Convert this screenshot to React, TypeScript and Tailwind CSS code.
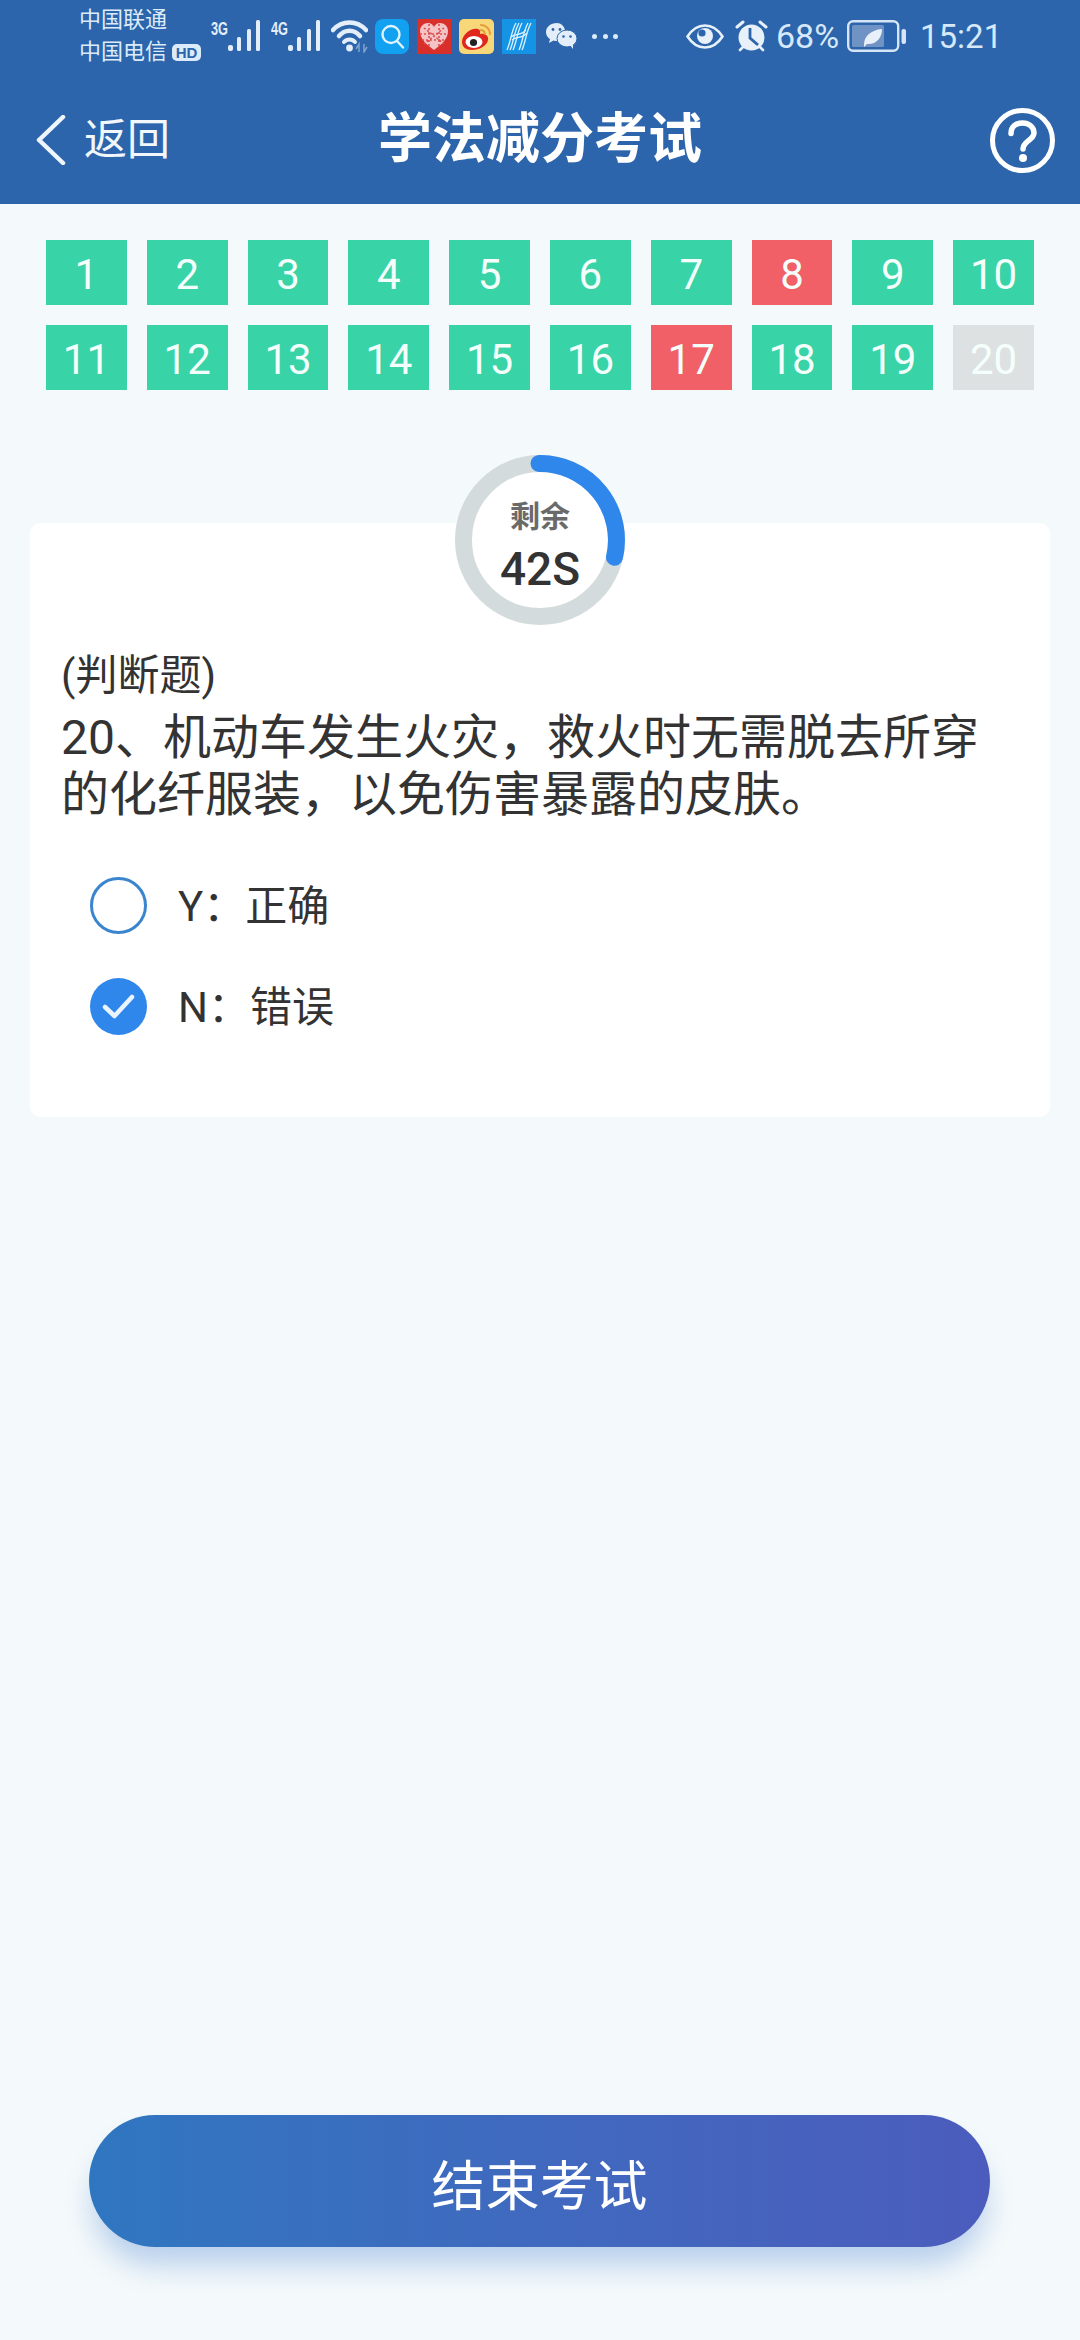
import React from "react";

const green = "bg-[#38d3a7]";
const cells: { n: number; bg: string }[] = Array.from({ length: 20 }, (_, i) => {
  const n = i + 1;
  if (n === 8 || n === 17) return { n, bg: "bg-[#f06066]" };
  if (n === 20) return { n, bg: "bg-[#dde1e2]" };
  return { n, bg: green };
});

function Signal({ label, w }: { label: string; w: number }) {
  return (
    <svg width={w} height="36" viewBox="0 0 51 36" className="shrink-0">
      <text x="0" y="17" fill="#e3eefa" fontSize="18" fontWeight="700" fontFamily="'Liberation Sans', sans-serif" textLength="17" lengthAdjust="spacingAndGlyphs">
        {label}
      </text>
      <rect x="17" y="27" width="5" height="6" rx="2" fill="#e3eefa" />
      <rect x="26" y="19" width="4" height="14" rx="1.5" fill="#e3eefa" />
      <rect x="36" y="11" width="4" height="22" rx="1.5" fill="#e3eefa" />
      <rect x="45" y="2" width="4" height="31" rx="1.5" fill="#e3eefa" />
    </svg>
  );
}

function Wifi() {
  return (
    <svg width="37" height="34" viewBox="0 0 37 34" className="shrink-0" fill="none">
      <path d="M2 11 C 11 1, 26 1, 35 11" stroke="#e3eefa" strokeWidth="4.500" strokeLinecap="round" />
      <path d="M8 17 C 14 10, 23 10, 29 17" stroke="#e3eefa" strokeWidth="4.500" strokeLinecap="round" />
      <path d="M13 23 C 16 19.5, 21 19.5, 24 23" stroke="#e3eefa" strokeWidth="4" strokeLinecap="round" />
      <circle cx="18.5" cy="29" r="3.400" fill="#e3eefa" />
      <path d="M28 33 V25 L25 30 M33 25 V33 L36 28" stroke="#7fa3cf" strokeWidth="1.5" />
    </svg>
  );
}

function SearchApp() {
  return (
    <svg width="34" height="35" viewBox="0 0 34 35" className="shrink-0" fill="none">
      <rect width="34" height="35" rx="8" fill="#12a0f0" />
      <circle cx="16" cy="15.5" r="8.5" stroke="#dff4ff" strokeWidth="2.4" />
      <path d="M22 22 L28 28.5" stroke="#dff4ff" strokeWidth="2.4" strokeLinecap="round" />
    </svg>
  );
}

function HeartApp() {
  return (
    <svg width="34" height="35" viewBox="0 0 34 35" className="shrink-0">
      <rect width="34" height="35" fill="#d92f2a" />
      <path d="M17 31 C 10 26, 3 20, 3 12 C 3 7, 7 4, 11 4 C 14 4, 16 6, 17 8 C 18 6, 20 4, 23 4 C 27 4, 31 7, 31 12 C 31 20, 24 26, 17 31 Z" fill="#f4c3c6" />
      <path d="M7 9 L27 25 M27 9 L7 25 M12 5 L12 27 M22 5 L22 27 M3 15 L31 15 M5 21 L29 21" stroke="#d9504f" strokeWidth="1.6" strokeDasharray="2 2" />
    </svg>
  );
}

function WeiboApp() {
  return (
    <svg width="35" height="35" viewBox="0 0 35 35" className="shrink-0" fill="none">
      <rect width="35" height="35" rx="5" fill="#f8d778" />
      <path d="M3 23 C 3 15, 13 8, 19 10 C 22 11, 21 14, 21 15 C 26 14, 30 17, 29 21 C 28 27, 20 31, 13 31 C 7 31, 3 28, 3 23 Z" fill="#e0261f" />
      <ellipse cx="15" cy="23" rx="8.5" ry="6" fill="#fff" />
      <circle cx="14.5" cy="23.5" r="3.6" fill="#222" />
      <path d="M22 6 C 27 6, 31 10, 31 15" stroke="#e59a35" strokeWidth="2" strokeLinecap="round" />
      <path d="M22 11 C 24 11, 26 13, 26 15" stroke="#e59a35" strokeWidth="2" strokeLinecap="round" />
    </svg>
  );
}

function HApp() {
  return (
    <svg width="34" height="35" viewBox="0 0 34 35" className="shrink-0" fill="none">
      <rect width="34" height="35" fill="#1594e6" />
      <g stroke="#d9f1ff" strokeWidth="1.3">
        <path d="M5 31 C 9 22, 9 13, 14 4" />
        <path d="M8 31 C 12 22, 12 13, 17 4" />
        <path d="M11 31 C 15 22, 15 13, 20 4" />
        <path d="M17 31 C 21 22, 21 13, 26 4" />
        <path d="M20 31 C 24 22, 24 13, 29 4" />
        <path d="M10 21 C 15 17, 20 20, 25 14" />
        <path d="M9 18 C 14 14, 19 17, 24 11" />
      </g>
    </svg>
  );
}

function Wechat() {
  return (
    <svg width="32" height="28" viewBox="0 0 32 28" className="shrink-0">
      <path d="M12 1 C 5.5 1, 1 5, 1 10 C 1 13, 2.5 15.5, 5 17 L4 21 L8.500 18.500 C 10 19, 11 19, 13 19 L20 8 C 19 4, 16 1, 12 1 Z" fill="#e3eefa" />
      <ellipse cx="22" cy="16.500" rx="10" ry="8.500" fill="#e3eefa" stroke="#2c65ab" strokeWidth="1" />
      <path d="M25 23 L28 27 L28 21 Z" fill="#e3eefa" />
      <circle cx="8" cy="7.500" r="1.400" fill="#2c65ab" />
      <circle cx="15" cy="7.500" r="1.400" fill="#2c65ab" />
      <circle cx="18.500" cy="14.500" r="1.300" fill="#2c65ab" />
      <circle cx="25.500" cy="14.500" r="1.300" fill="#2c65ab" />
    </svg>
  );
}

function Eye() {
  return (
    <svg width="38" height="25" viewBox="0 0 38 25" className="shrink-0" fill="none">
      <path d="M1.500 12.500 C 7 4, 13 1.500, 19 1.500 C 25 1.500, 31 4, 36.500 12.500 C 31 21, 25 23.500, 19 23.500 C 13 23.500, 7 21, 1.500 12.500 Z" stroke="#e8f0fa" strokeWidth="2.600" />
      <circle cx="19" cy="12" r="8" fill="#e8f0fa" />
      <circle cx="16" cy="9" r="3.600" fill="#2c65ab" />
    </svg>
  );
}

function Alarm() {
  return (
    <svg width="33" height="32" viewBox="0 0 33 32" className="shrink-0" fill="none">
      <circle cx="16.500" cy="17.500" r="13" fill="#e8f0fa" />
      <path d="M15 8 V18 L23 25" stroke="#2c65ab" strokeWidth="2.800" />
      <path d="M2 7 L8 2 M31 7 L25 2" stroke="#e8f0fa" strokeWidth="3" strokeLinecap="round" />
      <path d="M5 30 L8 27 M28 30 L25 27" stroke="#e8f0fa" strokeWidth="2.600" strokeLinecap="round" />
    </svg>
  );
}

function Battery() {
  return (
    <svg width="60" height="32" viewBox="0 0 60 32" className="shrink-0" fill="none">
      <rect x="1.200" y="1.200" width="50" height="29.600" rx="5" stroke="#d6e6f7" strokeWidth="2.400" />
      <rect x="5" y="5" width="32" height="22" rx="1.500" fill="#6f93c4" />
      <path d="M17 25 C 17 16, 24 10, 35 9 C 35 18, 29 25, 20 24 L 17 27 Z" fill="#e8f0fa" />
      <rect x="54.500" y="9" width="4.500" height="15" rx="2" fill="#d6e6f7" />
    </svg>
  );
}

function StatusBar() {
  return (
    <div className="flex h-[76px] items-center pb-[4px] pl-[79px]">
      <div className="flex w-[132px] shrink-0 flex-col text-[22px] leading-[32px] text-[#dcebf9]">
        <span className="h-[32px]">中国联通</span>
        <span className="flex h-[32px] items-center">
          中国电信
          <span className="ml-[5px] flex h-[17px] w-[29px] items-center justify-center rounded-[5px] bg-[#dcebf9] font-['Liberation_Sans',sans-serif] text-[15px] font-bold leading-none text-[#2c65ab]">
            HD
          </span>
        </span>
      </div>
      <Signal label="3G" w={51} />
      <div className="ml-[9px]">
        <Signal label="4G" w={51} />
      </div>
      <div className="ml-[9px]">
        <Wifi />
      </div>
      <div className="ml-[7px] flex items-center gap-[8px]">
        <SearchApp />
        <HeartApp />
        <WeiboApp />
        <HApp />
        <div className="ml-[1px]">
          <Wechat />
        </div>
      </div>
      <div className="ml-[15px] flex w-[26px] shrink-0 justify-between">
        <span className="h-[5px] w-[5px] rounded-full bg-[#dcebf9]" />
        <span className="h-[5px] w-[5px] rounded-full bg-[#dcebf9]" />
        <span className="h-[5px] w-[5px] rounded-full bg-[#dcebf9]" />
      </div>
      <div className="ml-[68px]">
        <Eye />
      </div>
      <div className="ml-[11px]">
        <Alarm />
      </div>
      <span className="ml-[8px] w-[64px] shrink-0 text-[34px] leading-none text-[#d6e8fa]">68%</span>
      <div className="ml-[7px]">
        <Battery />
      </div>
      <span className="ml-[13px] text-[33px] leading-none text-[#d6e8fa]">15:21</span>
    </div>
  );
}

function NavBar() {
  return (
    <div className="flex h-[128px] items-center justify-between pl-[36px] pr-[25px]">
      <div className="flex w-[189px] items-center gap-[18px]">
        <svg width="30" height="50" viewBox="0 0 30 50" fill="none" className="shrink-0">
          <path d="M27 2 L3 25 L27 48" stroke="#eef5fc" strokeWidth="4.500" strokeLinecap="round" strokeLinejoin="round" />
        </svg>
        <span className="text-[43px] leading-none text-[#f2f7fc]">返回</span>
      </div>
      <span className="text-[54px] font-bold leading-none text-white">学法减分考试</span>
      <div className="flex w-[200px] justify-end">
        <svg width="65" height="65" viewBox="0 0 65 65" fill="none">
          <circle cx="32.500" cy="32.500" r="30" stroke="#fff" strokeWidth="5" />
          <path d="M21 25.500 C 21 18.500, 26 15, 32.500 15 C 39 15, 44 19, 44 25 C 44 32, 33 33, 33 41" stroke="#fff" strokeWidth="5.500" strokeLinecap="round" />
          <circle cx="33" cy="50" r="4" fill="#fff" />
        </svg>
      </div>
    </div>
  );
}

function Timer() {
  return (
    <div className="relative z-10 flex h-[170px] w-[170px] flex-col items-center self-center rounded-full bg-white">
      <svg width="170" height="170" viewBox="0 0 170 170" fill="none" className="absolute left-0 top-0">
        <circle cx="85" cy="85" r="76.500" stroke="#d4dbdc" strokeWidth="17" />
        <path d="M 84 8.500 A 76.500 76.500 0 0 1 159.500 102.200" stroke="#2f87ec" strokeWidth="17" strokeLinecap="round" />
      </svg>
      <span className="relative mt-[44px] text-[30px] font-bold leading-[36px] text-[#6a6a6a]">剩余</span>
      <span className="relative mt-[7px] text-[46px] font-medium leading-[54px] text-[#333333]">42S</span>
    </div>
  );
}

function Option({ label, text, checked, gap }: { label: string; text: string; checked: boolean; gap: string }) {
  return (
    <div className="flex h-[57px] items-center gap-[31px]">
      {checked ? (
        <span className="flex h-[57px] w-[57px] shrink-0 items-center justify-center rounded-full bg-[#2f87ec]">
          <svg width="33" height="27" viewBox="0 0 33 27" fill="none">
            <path d="M3 14 L12.500 23 L30 4" stroke="#eaf4ff" strokeWidth="4.500" strokeLinecap="round" strokeLinejoin="round" />
          </svg>
        </span>
      ) : (
        <span className="h-[57px] w-[57px] shrink-0 rounded-full border-[3px] border-[#3b85cf]" />
      )}
      <span className="flex items-center pt-[3px] text-[42px] leading-none text-[#333333]">
        <span>{label}</span>
        <span className={gap}>：</span>
        <span>{text}</span>
      </span>
    </div>
  );
}

export default function App() {
  return (
    <div className="flex h-[2340px] w-[1080px] flex-col overflow-hidden bg-[#f4f9fb] font-['Roboto','Noto_Sans_CJK_SC',sans-serif]">
      <header className="h-[204px] shrink-0 bg-[#2c65ab]">
        <StatusBar />
        <NavBar />
      </header>

      <div className="mx-[46px] mt-[36px] grid grid-cols-10 gap-x-[20px] gap-y-[20px]">
        {cells.map((c) => (
          <div key={c.n} className={`flex h-[65px] items-center justify-center pt-[4px] text-[42px] leading-none text-[#f4fffb] ${c.bg}`}>
            {c.n}
          </div>
        ))}
      </div>

      <div className="mt-[65px] flex flex-col">
        <Timer />
        <div className="mx-[30px] -mt-[102px] flex h-[594px] flex-col rounded-[10px] bg-white pl-[31px] pr-[28px] pt-[127px]">
          <div className="text-[42px] leading-[52px] text-[#333333]">(判断题)</div>
          <div className="mt-[7px] text-[48px] leading-[57px] text-[#333333]">
            20、机动车发生火灾，救火时无需脱去所穿的化纤服装，以免伤害暴露的皮肤。
          </div>
          <div className="ml-[29px] mt-[54px] flex flex-col gap-[44px]">
            <Option label="Y" text="正确" checked={false} gap="w-[42px]" />
            <Option label="N" text="错误" checked gap="w-[42px]" />
          </div>
        </div>
      </div>

      <button className="mb-[93px] ml-[89px] mt-auto flex h-[132px] w-[901px] items-center justify-center rounded-[66px] bg-gradient-to-r from-[#2f76c0] to-[#4b5cbd] pt-[14px] text-[54px] leading-none text-white shadow-[0_22px_28px_-4px_rgba(60,120,205,0.32)]">
        结束考试
      </button>
    </div>
  );
}
